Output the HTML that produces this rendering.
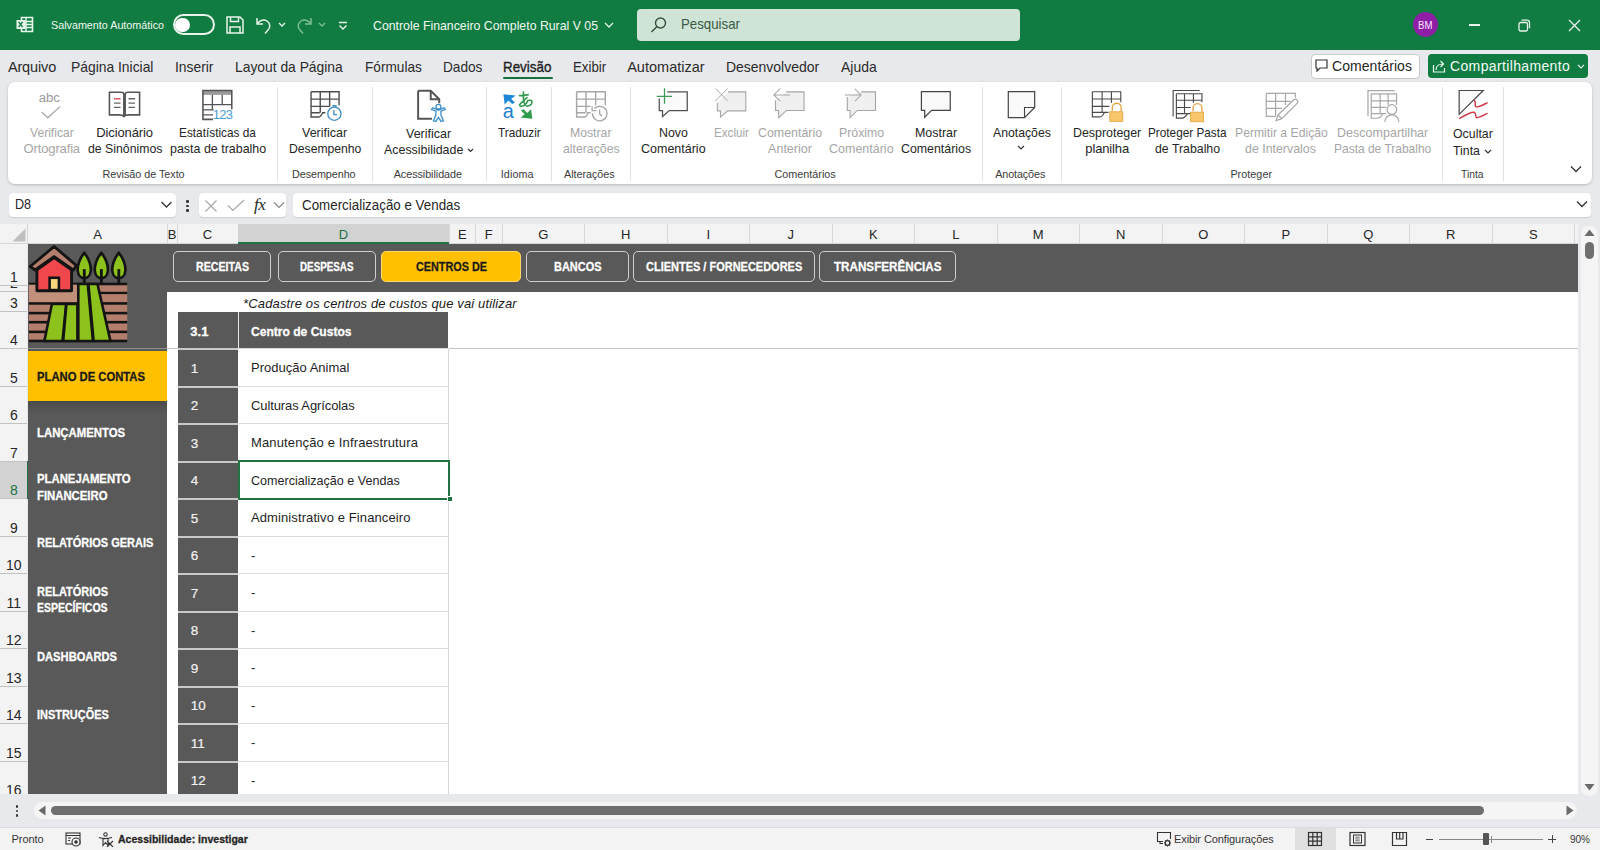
<!DOCTYPE html>
<html><head><meta charset="utf-8"><title>Excel</title>
<style>
html,body{margin:0;padding:0;}
body{width:1600px;height:850px;overflow:hidden;position:relative;background:#e8e9ec;font-family:"Liberation Sans",sans-serif;}
.t{position:absolute;white-space:nowrap;font-family:"Liberation Sans",sans-serif;}
.r{position:absolute;}
</style></head><body>
<div class="r" style="left:0px;top:0px;width:1600px;height:50px;background:#107c41;"></div>
<svg class="r" style="left:16px;top:16px;" width="18" height="17" viewBox="0 0 18 17"><path d="M5.5 1.5h11v14h-11z" fill="none" stroke="#e8f5ec" stroke-width="1.6"/><path d="M5.5 5.5h11M5.5 8.5h11M5.5 11.5h11M10 1.5v14" stroke="#e8f5ec" stroke-width="1.4"/><rect x="0.5" y="4" width="9" height="9" fill="#e8f5ec"/><path d="M2.6 5.8l4 5.4M6.6 5.8l-4 5.4" stroke="#107c41" stroke-width="1.4"/></svg>
<div class="t" style="left:51.00px;top:20.12px;font-size:11.5px;line-height:11.5px;color:#f2f7f3;letter-spacing:0.000px;transform:scaleX(0.9354);transform-origin:0.00px 0;">Salvamento Automático</div>
<div class="r" style="left:172.5px;top:14px;width:38px;height:17px;border:2px solid #e9f3ec;border-radius:11px"></div>
<div class="r" style="left:175px;top:17.5px;width:14.5px;height:14.5px;border-radius:50%;background:#fff"></div>
<svg class="r" style="left:226px;top:16px;" width="18" height="18" viewBox="0 0 18 18"><path d="M1 1h13l3 3v13H1z" fill="none" stroke="#e9f3ec" stroke-width="1.5"/><path d="M4.5 1v4.5h8V1M4 17v-6h10v6" fill="none" stroke="#e9f3ec" stroke-width="1.5"/></svg>
<svg class="r" style="left:255px;top:16px;" width="18" height="18" viewBox="0 0 18 18"><path d="M2 2v6h6" fill="none" stroke="#e9f3ec" stroke-width="1.5"/><path d="M2.5 7.5C5 4 9 3 12 5c3.5 2.5 3.5 6.5 1 9l-3 3.5" fill="none" stroke="#e9f3ec" stroke-width="1.5"/></svg>
<svg class="r" style="left:278px;top:21px;" width="8" height="7" viewBox="0 0 8 7"><path d="M1 2l3 3 3-3" fill="none" stroke="#e9f3ec" stroke-width="1.3"/></svg>
<svg class="r" style="left:295px;top:16px;" width="18" height="18" viewBox="0 0 18 18"><path d="M16 2v6h-6" fill="none" stroke="#7fbf95" stroke-width="1.5"/><path d="M15.5 7.5C13 4 9 3 6 5c-3.5 2.5-3.5 6.5-1 9l3 3.5" fill="none" stroke="#7fbf95" stroke-width="1.5"/></svg>
<svg class="r" style="left:318px;top:21px;" width="8" height="7" viewBox="0 0 8 7"><path d="M1 2l3 3 3-3" fill="none" stroke="#7fbf95" stroke-width="1.3"/></svg>
<svg class="r" style="left:338px;top:21px;" width="10" height="10" viewBox="0 0 10 10"><path d="M1 1.5h8M1.5 4.5l3.5 3.5 3.5-3.5" fill="none" stroke="#e9f3ec" stroke-width="1.4"/></svg>
<div class="t" style="left:373.00px;top:18.95px;font-size:13px;line-height:13px;color:#f2f7f3;letter-spacing:0.000px;transform:scaleX(0.9466);transform-origin:0.00px 0;">Controle Financeiro Completo Rural V 05</div>
<svg class="r" style="left:604px;top:21px;" width="10" height="8" viewBox="0 0 10 8"><path d="M1 2l4 4 4-4" fill="none" stroke="#e9f3ec" stroke-width="1.3"/></svg>
<div class="r" style="left:637px;top:9px;width:382.5px;height:31.5px;background:#cfe4d6;border-radius:4px"></div>
<svg class="r" style="left:650px;top:17px;" width="17" height="16" viewBox="0 0 17 16"><circle cx="10.5" cy="6" r="5" fill="none" stroke="#33503d" stroke-width="1.4"/><path d="M7 9.5L1.5 15" stroke="#33503d" stroke-width="1.5"/></svg>
<div class="t" style="left:680.50px;top:17.18px;font-size:14.5px;line-height:14.5px;color:#3a5a45;letter-spacing:0.000px;transform:scaleX(0.9147);transform-origin:0.00px 0;">Pesquisar</div>
<div class="r" style="left:1412.5px;top:12px;width:25px;height:25px;border-radius:50%;background:#8f1ea6"></div>
<div class="t" style="left:1417.50px;top:20.08px;font-size:10.5px;line-height:10.5px;color:#fbe6ff;letter-spacing:0.000px;transform:scaleX(0.9177);transform-origin:0.00px 0;">BM</div>
<div class="r" style="left:1469px;top:24px;width:11px;height:1.5px;background:#e9f3ec;"></div>
<svg class="r" style="left:1518px;top:19px;" width="13" height="13" viewBox="0 0 13 13"><rect x="1" y="3.5" width="8.5" height="8.5" rx="1.5" fill="none" stroke="#e9f3ec" stroke-width="1.3"/><path d="M3.5 1.2h5.5a2.5 2.5 0 0 1 2.5 2.5v5.5" fill="none" stroke="#e9f3ec" stroke-width="1.3"/></svg>
<svg class="r" style="left:1568px;top:19px;" width="13" height="13" viewBox="0 0 13 13"><path d="M1 1l11 11M12 1L1 12" stroke="#e9f3ec" stroke-width="1.3"/></svg>
<div class="r" style="left:0px;top:50px;width:1600px;height:138px;background:#e8e9ec;"></div>
<div class="t" style="left:7.90px;top:60.08px;font-size:14.5px;line-height:14.5px;color:#2b2b2b;letter-spacing:-0.133px;">Arquivo</div>
<div class="t" style="left:71.30px;top:60.08px;font-size:14.5px;line-height:14.5px;color:#2b2b2b;letter-spacing:0.000px;transform:scaleX(0.9560);transform-origin:0.00px 0;">Página Inicial</div>
<div class="t" style="left:174.50px;top:60.08px;font-size:14.5px;line-height:14.5px;color:#2b2b2b;letter-spacing:0.000px;transform:scaleX(0.9553);transform-origin:0.00px 0;">Inserir</div>
<div class="t" style="left:234.75px;top:60.08px;font-size:14.5px;line-height:14.5px;color:#2b2b2b;letter-spacing:0.000px;transform:scaleX(0.9544);transform-origin:0.00px 0;">Layout da Página</div>
<div class="t" style="left:365.40px;top:60.08px;font-size:14.5px;line-height:14.5px;color:#2b2b2b;letter-spacing:0.000px;transform:scaleX(0.9404);transform-origin:0.00px 0;">Fórmulas</div>
<div class="t" style="left:442.80px;top:60.08px;font-size:14.5px;line-height:14.5px;color:#2b2b2b;letter-spacing:0.000px;transform:scaleX(0.9403);transform-origin:0.00px 0;">Dados</div>
<div class="t" style="left:503.20px;top:60.08px;font-size:14.5px;line-height:14.5px;color:#1f1f1f;letter-spacing:0.000px;-webkit-text-stroke:0.35px #1f1f1f;transform:scaleX(0.9237);transform-origin:0.00px 0;">Revisão</div>
<div class="t" style="left:573.20px;top:60.08px;font-size:14.5px;line-height:14.5px;color:#2b2b2b;letter-spacing:0.000px;transform:scaleX(0.9146);transform-origin:0.00px 0;">Exibir</div>
<div class="t" style="left:627.20px;top:60.08px;font-size:14.5px;line-height:14.5px;color:#2b2b2b;letter-spacing:0.010px;">Automatizar</div>
<div class="t" style="left:726.00px;top:60.08px;font-size:14.5px;line-height:14.5px;color:#2b2b2b;letter-spacing:0.000px;transform:scaleX(0.9628);transform-origin:0.00px 0;">Desenvolvedor</div>
<div class="t" style="left:840.50px;top:60.08px;font-size:14.5px;line-height:14.5px;color:#2b2b2b;letter-spacing:0.000px;transform:scaleX(0.9623);transform-origin:0.00px 0;">Ajuda</div>
<div class="r" style="left:503px;top:76.5px;width:50px;height:2.5px;background:#17703e;border-radius:1.5px;"></div>
<div class="r" style="left:1310.5px;top:53.5px;width:107px;height:23px;background:#fff;border:1px solid #c9c9c9;border-radius:4px"></div>
<svg class="r" style="left:1315px;top:59px;" width="13" height="13" viewBox="0 0 13 13"><path d="M1 1h11v8H5l-3 3V9H1z" fill="none" stroke="#333" stroke-width="1.2"/></svg>
<div class="t" style="left:1332.00px;top:59.10px;font-size:14px;line-height:14px;color:#262626;letter-spacing:0.060px;">Comentários</div>
<div class="r" style="left:1428px;top:53.5px;width:159.5px;height:24.5px;background:#107c41;border-radius:4px"></div>
<svg class="r" style="left:1432px;top:59px;" width="14" height="14" viewBox="0 0 14 14"><path d="M1.5 6v7h11V9" fill="none" stroke="#e8f5ec" stroke-width="1.2"/><path d="M4 11c0-4 3-6 7-6M8.5 2l3 3-3 3" fill="none" stroke="#e8f5ec" stroke-width="1.2"/></svg>
<div class="t" style="left:1450.00px;top:59.10px;font-size:14px;line-height:14px;color:#f4faf6;letter-spacing:0.360px;">Compartilhamento</div>
<svg class="r" style="left:1577px;top:64px;" width="8" height="6" viewBox="0 0 8 6"><path d="M1 1l3 3 3-3" fill="none" stroke="#e8f5ec" stroke-width="1.2"/></svg>
<div class="r" style="left:8px;top:82px;width:1583.5px;height:102px;background:#fff;border-radius:7px;box-shadow:0 1px 3px rgba(0,0,0,0.20)"></div>
<div class="t" style="left:29.75px;top:125.75px;font-size:13px;line-height:13px;color:#a6a6a6;letter-spacing:0.000px;transform:scaleX(0.9309);transform-origin:0.00px 0;">Verificar</div>
<div class="t" style="left:23.60px;top:141.95px;font-size:13px;line-height:13px;color:#a6a6a6;letter-spacing:-0.144px;">Ortografia</div>
<div class="t" style="left:96.25px;top:125.75px;font-size:13px;line-height:13px;color:#262626;letter-spacing:-0.106px;">Dicionário</div>
<div class="t" style="left:87.50px;top:141.95px;font-size:13px;line-height:13px;color:#262626;letter-spacing:0.000px;transform:scaleX(0.9442);transform-origin:0.00px 0;">de Sinônimos</div>
<div class="t" style="left:179.40px;top:125.75px;font-size:13px;line-height:13px;color:#262626;letter-spacing:0.000px;transform:scaleX(0.9102);transform-origin:0.00px 0;">Estatísticas da</div>
<div class="t" style="left:169.75px;top:141.95px;font-size:13px;line-height:13px;color:#262626;letter-spacing:0.000px;transform:scaleX(0.9577);transform-origin:0.00px 0;">pasta de trabalho</div>
<div class="t" style="left:102.40px;top:169.12px;font-size:10.8px;line-height:10.8px;color:#3b3b3b;letter-spacing:-0.027px;">Revisão de Texto</div>
<div class="t" style="left:302.40px;top:125.75px;font-size:13px;line-height:13px;color:#262626;letter-spacing:0.000px;transform:scaleX(0.9596);transform-origin:0.00px 0;">Verificar</div>
<div class="t" style="left:289.00px;top:141.95px;font-size:13px;line-height:13px;color:#262626;letter-spacing:0.000px;transform:scaleX(0.9360);transform-origin:0.00px 0;">Desempenho</div>
<div class="t" style="left:292.00px;top:169.12px;font-size:10.8px;line-height:10.8px;color:#3b3b3b;letter-spacing:-0.067px;">Desempenho</div>
<div class="t" style="left:406.40px;top:126.75px;font-size:13px;line-height:13px;color:#262626;letter-spacing:0.000px;transform:scaleX(0.9596);transform-origin:0.00px 0;">Verificar</div>
<div class="t" style="left:383.80px;top:143.45px;font-size:13px;line-height:13px;color:#262626;letter-spacing:0.000px;transform:scaleX(0.9543);transform-origin:0.00px 0;">Acessibilidade</div>
<svg class="r" style="left:467px;top:148px;" width="7" height="5" viewBox="0 0 7 5"><path d="M1 1l2.5 2.5L6 1" fill="none" stroke="#333" stroke-width="1.2"/></svg>
<div class="t" style="left:393.70px;top:169.12px;font-size:10.8px;line-height:10.8px;color:#3b3b3b;letter-spacing:-0.054px;">Acessibilidade</div>
<div class="t" style="left:497.80px;top:125.75px;font-size:13px;line-height:13px;color:#262626;letter-spacing:0.000px;transform:scaleX(0.9068);transform-origin:0.00px 0;">Traduzir</div>
<div class="t" style="left:500.80px;top:169.12px;font-size:10.8px;line-height:10.8px;color:#3b3b3b;letter-spacing:0.060px;">Idioma</div>
<div class="t" style="left:569.50px;top:125.75px;font-size:13px;line-height:13px;color:#a6a6a6;letter-spacing:0.000px;transform:scaleX(0.9410);transform-origin:0.00px 0;">Mostrar</div>
<div class="t" style="left:562.60px;top:141.95px;font-size:13px;line-height:13px;color:#a6a6a6;letter-spacing:0.000px;transform:scaleX(0.9433);transform-origin:0.00px 0;">alterações</div>
<div class="t" style="left:564.00px;top:169.12px;font-size:10.8px;line-height:10.8px;color:#3b3b3b;letter-spacing:-0.044px;">Alterações</div>
<div class="t" style="left:658.90px;top:125.75px;font-size:13px;line-height:13px;color:#262626;letter-spacing:0.000px;transform:scaleX(0.9521);transform-origin:0.00px 0;">Novo</div>
<div class="t" style="left:641.00px;top:141.95px;font-size:13px;line-height:13px;color:#262626;letter-spacing:0.000px;transform:scaleX(0.9613);transform-origin:0.00px 0;">Comentário</div>
<div class="t" style="left:713.90px;top:125.75px;font-size:13px;line-height:13px;color:#a6a6a6;letter-spacing:0.000px;transform:scaleX(0.8949);transform-origin:0.00px 0;">Excluir</div>
<div class="t" style="left:757.90px;top:125.75px;font-size:13px;line-height:13px;color:#a6a6a6;letter-spacing:0.000px;transform:scaleX(0.9539);transform-origin:0.00px 0;">Comentário</div>
<div class="t" style="left:768.00px;top:141.95px;font-size:13px;line-height:13px;color:#a6a6a6;letter-spacing:0.000px;transform:scaleX(0.9670);transform-origin:0.00px 0;">Anterior</div>
<div class="t" style="left:838.50px;top:125.75px;font-size:13px;line-height:13px;color:#a6a6a6;letter-spacing:0.000px;transform:scaleX(0.9455);transform-origin:0.00px 0;">Próximo</div>
<div class="t" style="left:829.40px;top:141.95px;font-size:13px;line-height:13px;color:#a6a6a6;letter-spacing:0.000px;transform:scaleX(0.9613);transform-origin:0.00px 0;">Comentário</div>
<div class="t" style="left:914.60px;top:125.75px;font-size:13px;line-height:13px;color:#262626;letter-spacing:0.000px;transform:scaleX(0.9546);transform-origin:0.00px 0;">Mostrar</div>
<div class="t" style="left:900.90px;top:141.95px;font-size:13px;line-height:13px;color:#262626;letter-spacing:0.000px;transform:scaleX(0.9512);transform-origin:0.00px 0;">Comentários</div>
<div class="t" style="left:774.40px;top:169.12px;font-size:10.8px;line-height:10.8px;color:#3b3b3b;letter-spacing:0.010px;">Comentários</div>
<div class="t" style="left:993.00px;top:125.75px;font-size:13px;line-height:13px;color:#262626;letter-spacing:0.000px;transform:scaleX(0.9414);transform-origin:0.00px 0;">Anotações</div>
<svg class="r" style="left:1017px;top:145px;" width="8" height="5" viewBox="0 0 8 5"><path d="M1 1l3 3 3-3" fill="none" stroke="#333" stroke-width="1.2"/></svg>
<div class="t" style="left:995.20px;top:169.12px;font-size:10.8px;line-height:10.8px;color:#3b3b3b;letter-spacing:-0.113px;">Anotações</div>
<div class="t" style="left:1072.80px;top:125.75px;font-size:13px;line-height:13px;color:#262626;letter-spacing:0.000px;transform:scaleX(0.9538);transform-origin:0.00px 0;">Desproteger</div>
<div class="t" style="left:1085.30px;top:141.95px;font-size:13px;line-height:13px;color:#262626;letter-spacing:-0.143px;">planilha</div>
<div class="t" style="left:1148.40px;top:125.75px;font-size:13px;line-height:13px;color:#262626;letter-spacing:0.000px;transform:scaleX(0.9055);transform-origin:0.00px 0;">Proteger Pasta</div>
<div class="t" style="left:1155.20px;top:141.95px;font-size:13px;line-height:13px;color:#262626;letter-spacing:0.000px;transform:scaleX(0.9476);transform-origin:0.00px 0;">de Trabalho</div>
<div class="t" style="left:1234.50px;top:125.75px;font-size:13px;line-height:13px;color:#a6a6a6;letter-spacing:0.000px;transform:scaleX(0.9374);transform-origin:0.00px 0;">Permitir a Edição</div>
<div class="t" style="left:1245.00px;top:141.95px;font-size:13px;line-height:13px;color:#a6a6a6;letter-spacing:0.000px;transform:scaleX(0.9516);transform-origin:0.00px 0;">de Intervalos</div>
<div class="t" style="left:1336.70px;top:125.75px;font-size:13px;line-height:13px;color:#a6a6a6;letter-spacing:0.000px;transform:scaleX(0.9641);transform-origin:0.00px 0;">Descompartilhar</div>
<div class="t" style="left:1334.00px;top:141.95px;font-size:13px;line-height:13px;color:#a6a6a6;letter-spacing:0.000px;transform:scaleX(0.9213);transform-origin:0.00px 0;">Pasta de Trabalho</div>
<div class="t" style="left:1230.40px;top:169.12px;font-size:10.8px;line-height:10.8px;color:#3b3b3b;letter-spacing:0.029px;">Proteger</div>
<div class="t" style="left:1453.20px;top:126.95px;font-size:13px;line-height:13px;color:#262626;letter-spacing:0.000px;transform:scaleX(0.9499);transform-origin:0.00px 0;">Ocultar</div>
<div class="t" style="left:1453.00px;top:143.95px;font-size:13px;line-height:13px;color:#262626;letter-spacing:0.000px;transform:scaleX(0.9474);transform-origin:0.00px 0;">Tinta</div>
<svg class="r" style="left:1484px;top:149px;" width="8" height="5" viewBox="0 0 8 5"><path d="M1 1l3 3 3-3" fill="none" stroke="#333" stroke-width="1.2"/></svg>
<div class="t" style="left:1461.00px;top:169.12px;font-size:10.8px;line-height:10.8px;color:#3b3b3b;letter-spacing:0.000px;transform:scaleX(0.9536);transform-origin:0.00px 0;">Tinta</div>
<svg class="r" style="left:1570px;top:165px;" width="12" height="8" viewBox="0 0 12 8"><path d="M1 1.5l5 5 5-5" fill="none" stroke="#333" stroke-width="1.3"/></svg>
<div class="r" style="left:276.5px;top:87px;width:1.0px;height:94px;background:#e1e1e1;"></div>
<div class="r" style="left:371.8px;top:87px;width:1.0px;height:94px;background:#e1e1e1;"></div>
<div class="r" style="left:485.5px;top:87px;width:1.0px;height:94px;background:#e1e1e1;"></div>
<div class="r" style="left:551px;top:87px;width:1px;height:94px;background:#e1e1e1;"></div>
<div class="r" style="left:629.6px;top:87px;width:1.0px;height:94px;background:#e1e1e1;"></div>
<div class="r" style="left:981.5px;top:87px;width:1.0px;height:94px;background:#e1e1e1;"></div>
<div class="r" style="left:1061.2px;top:87px;width:1.0px;height:94px;background:#e1e1e1;"></div>
<div class="r" style="left:1442.4px;top:87px;width:1.0px;height:94px;background:#e1e1e1;"></div>
<div class="r" style="left:1503.1px;top:87px;width:1.0px;height:94px;background:#e1e1e1;"></div>
<svg class="r" style="left:30px;top:85px" width="210" height="40" viewBox="0 0 1600 305" fill="none" stroke-linecap="butt" stroke-linejoin="miter"><text x="66" y="132" font-family="Liberation Sans" font-size="100" fill="#9a9a9a" stroke="none">abc</text><path d="M88 205L135 250L228 165" stroke="#a6a6a6" stroke-width="10"/><path d="M715 240V72Q715 55 695 55H605V228H680Q705 228 715 240Q725 228 750 228H835V55H745Q725 55 725 72V240" fill="#fff" stroke="#555" stroke-width="12"/><path d="M640 105H690" stroke="#d8434f" stroke-width="10"/><path d="M640 138H690M640 170H690M750 105H800M750 138H800M750 170H800" stroke="#666" stroke-width="10"/><rect x="1318" y="42" width="220" height="33" fill="#9a9a9a" stroke="none"/><path d="M1395 262H1318V42H1538V185" stroke="#555" stroke-width="12"/><path d="M1318 150H1538M1318 190H1400M1318 228H1395M1390 75V190M1465 75V150" stroke="#555" stroke-width="10"/><text x="1392" y="258" font-family="Liberation Sans" font-size="98" fill="#4a9bd0" stroke="none" letter-spacing="-4">123</text></svg>
<svg class="r" style="left:300px;top:85px" width="60" height="40" viewBox="0 0 1275 850" fill="none" stroke-linecap="butt" stroke-linejoin="miter"><path d="M235 145H830V430M235 145V680H400Q440 680 480 590H540M235 300H830M235 455H630M235 590H420M430 145V590M630 145V455" stroke="#4d4d4d" stroke-width="30"/><circle cx="730" cy="610" r="140" fill="#fff" stroke="#3d8cc0" stroke-width="28"/><rect x="690" y="425" width="90" height="35" fill="#3d8cc0" stroke="none"/><path d="M720 530V630H790" stroke="#3d8cc0" stroke-width="28"/></svg>
<svg class="r" style="left:410px;top:85px" width="130" height="40" viewBox="0 0 1600 492" fill="none" stroke-linecap="butt" stroke-linejoin="miter"><path d="M100 70H255L360 175V225M100 70V415H270M255 70V175H360" stroke="#555" stroke-width="24"/><circle cx="350" cy="268" r="30" fill="#fff" stroke="#3a8fc8" stroke-width="16"/><path d="M265 300L320 322L318 372L288 440L318 448L350 398L382 448L412 440L382 372L380 322L435 300L420 280L350 310L280 280Z" fill="#fff" stroke="#3a8fc8" stroke-width="16"/><polygon points="1150,115 1300,130 1245,172 1292,215 1258,235 1210,192 1165,240" fill="#1e88d8" stroke="none"/><text x="1140" y="410" font-family="Liberation Sans" font-size="245" fill="#1e7fd0" stroke="none">a</text><path d="M1340 130Q1400 128 1462 118M1398 78Q1385 180 1420 258M1445 150Q1370 220 1350 240Q1345 265 1375 262Q1430 250 1450 190Q1520 175 1495 232Q1480 258 1428 262" stroke="#2e9a4e" stroke-width="20"/><polygon points="1505,415 1360,400 1412,360 1365,315 1398,298 1442,343 1490,298" fill="#2e9a4e" stroke="none"/></svg>
<svg class="r" style="left:570px;top:85px" width="60" height="40" viewBox="0 0 1275 850" fill="none" stroke-linecap="butt" stroke-linejoin="miter"><path d="M140 145H750V430M140 145V680H310Q350 680 380 590H440M140 300H750M140 455H440M140 590H330M340 145V590M545 145V430" stroke="#a6a6a6" stroke-width="30"/><path d="M520 500A155 155 0 1 1 478 600" fill="#fff" stroke="#a6a6a6" stroke-width="28"/><path d="M470 455V545H565M630 520V610L680 665" stroke="#a6a6a6" stroke-width="28"/></svg>
<svg class="r" style="left:650px;top:84px" width="80" height="38" viewBox="0 0 1600 760" fill="none" stroke-linecap="butt" stroke-linejoin="miter"><path d="M345 155H745V530H385L250 650V530H185V290" fill="#fbfbfb" stroke="#505050" stroke-width="25"/><path d="M290 85V395M135 245H440" stroke="#3c9a5a" stroke-width="25"/></svg>
<svg class="r" style="left:710px;top:84px" width="60" height="38" viewBox="0 0 1342 850" fill="none" stroke-linecap="butt" stroke-linejoin="miter"><path d="M405 175H800V600H395L235 740V600H165V420" fill="#f0f0f0" stroke="#a6a6a6" stroke-width="25"/><path d="M120 100L395 380M395 100L120 385" stroke="#a6a6a6" stroke-width="22"/></svg>
<svg class="r" style="left:770px;top:84px" width="110" height="38" viewBox="0 0 1600 553" fill="none" stroke-linecap="butt" stroke-linejoin="miter"><path d="M235 115H495V385H240L125 490V385H80V235" fill="#f0f0f0" stroke="#a6a6a6" stroke-width="16"/><path d="M55 160H290M150 65L55 160L150 250" stroke="#a6a6a6" stroke-width="15"/><path d="M1325 115H1535V385H1270L1165 490V385H1125V190" fill="#f0f0f0" stroke="#a6a6a6" stroke-width="16"/><path d="M1090 160H1325M1235 70L1325 160L1235 250" stroke="#a6a6a6" stroke-width="15"/></svg>
<svg class="r" style="left:910px;top:84px" width="130" height="38" viewBox="0 0 1600 468" fill="none" stroke-linecap="butt" stroke-linejoin="miter"><path d="M140 95H495V325H265L180 410V325H140Z" fill="#fafafa" stroke="#454545" stroke-width="15"/><path d="M1210 95H1535V290L1410 415H1210Z" fill="#fafafa" stroke="#454545" stroke-width="15"/><path d="M1535 290H1410V415" stroke="#454545" stroke-width="14"/></svg>
<svg class="r" style="left:1085px;top:84px" width="130" height="41" viewBox="0 0 1600 505" fill="none" stroke-linecap="butt" stroke-linejoin="miter"><path d="M90 95H440V225M90 95V405H180Q210 405 240 350H290M90 185H440M90 275H300M90 350H240M210 95V350M325 95V230" stroke="#4a4a4a" stroke-width="14"/><path d="M335 332V292A55 55 0 0 1 445 292V342" stroke="#e3a23c" stroke-width="16"/><rect x="305" y="342" width="160" height="118" fill="#f8c66c" stroke="#e5a33a" stroke-width="10"/><path d="M1085 400V80H1410" stroke="#4a4a4a" stroke-width="14"/><path d="M1125 120H1440V225M1125 120V420H1195Q1230 420 1260 365H1310M1125 200H1440M1125 290H1300M1125 365H1250M1225 120V365M1335 120V230" stroke="#4a4a4a" stroke-width="14"/><path d="M1330 337V297A55 55 0 0 1 1440 297V347" stroke="#e3a23c" stroke-width="16"/><rect x="1300" y="347" width="160" height="118" fill="#f8c66c" stroke="#e5a33a" stroke-width="10"/></svg>
<svg class="r" style="left:1255px;top:84px" width="150" height="41" viewBox="0 0 1600 437" fill="none" stroke-linecap="butt" stroke-linejoin="miter"><path d="M120 100H430V145M120 100V345H220M120 185H380M120 260H290M220 100V345M325 100V225" stroke="#a8a8a8" stroke-width="13"/><path d="M225 390L245 330L410 170Q430 150 450 172Q465 192 445 212L285 370Z M245 330L285 370" fill="#fff" stroke="#a8a8a8" stroke-width="13"/><path d="M1205 345V70H1490" stroke="#a8a8a8" stroke-width="13"/><path d="M1240 105H1510V225M1240 105V365H1300Q1340 365 1365 315H1400M1240 180H1510M1240 250H1400M1240 315H1360M1335 105V315M1420 105V225" stroke="#a8a8a8" stroke-width="13"/><circle cx="1460" cy="272" r="52" fill="#fff" stroke="#a8a8a8" stroke-width="13"/><path d="M1385 405A75 75 0 0 1 1535 405" fill="#fff" stroke="#a8a8a8" stroke-width="13"/></svg>
<svg class="r" style="left:1450px;top:84px" width="50" height="41" viewBox="0 0 1037 850" fill="none" stroke-linecap="butt" stroke-linejoin="miter"><path d="M190 135H690L190 630Z" fill="#fafafa" stroke="#4a4a4a" stroke-width="25"/><path d="M490 335C545 350 515 430 530 465C565 505 700 425 780 385" stroke="#cc3a4a" stroke-width="30"/><path d="M190 720C300 655 450 560 510 590C550 620 515 700 560 700C620 690 700 645 780 610" stroke="#cc3a4a" stroke-width="30"/></svg>
<div class="r" style="left:9px;top:193px;width:167px;height:23.5px;background:#fff;border-radius:4px;box-shadow:0 0.5px 1px rgba(0,0,0,0.12)"></div>
<div class="t" style="left:14.70px;top:197.28px;font-size:14.5px;line-height:14.5px;color:#262626;letter-spacing:0.000px;transform:scaleX(0.8703);transform-origin:0.00px 0;">D8</div>
<svg class="r" style="left:160px;top:200px;" width="13" height="9" viewBox="0 0 13 9"><path d="M1.5 2l5 5 5-5" fill="none" stroke="#333" stroke-width="1.3"/></svg>
<div class="r" style="left:186px;top:200px;width:2.5px;height:2.5px;border-radius:50%;background:#333"></div>
<div class="r" style="left:186px;top:204.5px;width:2.5px;height:2.5px;border-radius:50%;background:#333"></div>
<div class="r" style="left:186px;top:209px;width:2.5px;height:2.5px;border-radius:50%;background:#333"></div>
<div class="r" style="left:199px;top:193px;width:86.5px;height:23.5px;background:#fff;border-radius:4px;box-shadow:0 0.5px 1px rgba(0,0,0,0.12)"></div>
<svg class="r" style="left:204px;top:199px;" width="14" height="14" viewBox="0 0 14 14"><path d="M1.5 1.5l11 11M12.5 1.5l-11 11" stroke="#a8a8a8" stroke-width="1.2"/></svg>
<svg class="r" style="left:227px;top:199px;" width="18" height="13" viewBox="0 0 18 13"><path d="M1 6.5l5 5L17 1" fill="none" stroke="#a8a8a8" stroke-width="1.2"/></svg>
<div class="t" style="left:254px;top:196px;font-family:'Liberation Serif';font-style:italic;font-size:17px;line-height:17px;color:#262626;letter-spacing:-0.5px">fx</div>
<svg class="r" style="left:273px;top:201px;" width="12" height="8" viewBox="0 0 12 8"><path d="M1 1.5l5 5 5-5" fill="none" stroke="#888" stroke-width="1.2"/></svg>
<div class="r" style="left:292.5px;top:193px;width:1298.5px;height:23.5px;background:#fff;border-radius:4px;box-shadow:0 0.5px 1px rgba(0,0,0,0.12)"></div>
<div class="t" style="left:302.30px;top:197.90px;font-size:14px;line-height:14px;color:#262626;letter-spacing:0.000px;transform:scaleX(0.9542);transform-origin:0.00px 0;">Comercialização e Vendas</div>
<svg class="r" style="left:1576px;top:200px;" width="12" height="8" viewBox="0 0 12 8"><path d="M1 1.5l5 5 5-5" fill="none" stroke="#333" stroke-width="1.3"/></svg>
<div class="r" style="left:0px;top:224px;width:1578px;height:20px;background:#f3f3f3;"></div>
<div class="r" style="left:0px;top:243px;width:1578px;height:1px;background:#d6d6d6;"></div>
<svg class="r" style="left:11px;top:227px;" width="16" height="15" viewBox="0 0 16 15"><path d="M14.5 1.5v13h-13z" fill="#bfbfbf"/></svg>
<div class="r" style="left:166.5px;top:224px;width:1.0px;height:19px;background:#d9d9d9;"></div>
<div class="t" style="left:93.15px;top:227.95px;font-size:13px;line-height:13px;color:#262626;letter-spacing:0.000px;">A</div>
<div class="r" style="left:176.5px;top:224px;width:1.0px;height:19px;background:#d9d9d9;"></div>
<div class="t" style="left:167.65px;top:227.95px;font-size:13px;line-height:13px;color:#262626;letter-spacing:0.000px;">B</div>
<div class="r" style="left:237.5px;top:224px;width:1.0px;height:19px;background:#d9d9d9;"></div>
<div class="t" style="left:202.80px;top:227.95px;font-size:13px;line-height:13px;color:#262626;letter-spacing:0.000px;">C</div>
<div class="r" style="left:238px;top:224px;width:211px;height:19px;background:#d2d2d2;"></div>
<div class="r" style="left:238px;top:241.5px;width:211px;height:2.0px;background:#217346;"></div>
<div class="r" style="left:448.5px;top:224px;width:1.0px;height:19px;background:#d9d9d9;"></div>
<div class="t" style="left:338.80px;top:227.95px;font-size:13px;line-height:13px;color:#217346;letter-spacing:0.000px;">D</div>
<div class="r" style="left:475.0px;top:224px;width:1.0px;height:19px;background:#d9d9d9;"></div>
<div class="t" style="left:457.90px;top:227.95px;font-size:13px;line-height:13px;color:#262626;letter-spacing:0.000px;">E</div>
<div class="r" style="left:501.5px;top:224px;width:1.0px;height:19px;background:#d9d9d9;"></div>
<div class="t" style="left:484.80px;top:227.95px;font-size:13px;line-height:13px;color:#262626;letter-spacing:0.000px;">F</div>
<div class="r" style="left:584.0px;top:224px;width:1.0px;height:19px;background:#d9d9d9;"></div>
<div class="t" style="left:538.20px;top:227.95px;font-size:13px;line-height:13px;color:#262626;letter-spacing:0.000px;">G</div>
<div class="r" style="left:666.5px;top:224px;width:1.0px;height:19px;background:#d9d9d9;"></div>
<div class="t" style="left:621.05px;top:227.95px;font-size:13px;line-height:13px;color:#262626;letter-spacing:0.000px;">H</div>
<div class="r" style="left:749.0px;top:224px;width:1.0px;height:19px;background:#d9d9d9;"></div>
<div class="t" style="left:706.45px;top:227.95px;font-size:13px;line-height:13px;color:#262626;letter-spacing:0.000px;">I</div>
<div class="r" style="left:831.5px;top:224px;width:1.0px;height:19px;background:#d9d9d9;"></div>
<div class="t" style="left:787.50px;top:227.95px;font-size:13px;line-height:13px;color:#262626;letter-spacing:0.000px;">J</div>
<div class="r" style="left:914.0px;top:224px;width:1.0px;height:19px;background:#d9d9d9;"></div>
<div class="t" style="left:868.90px;top:227.95px;font-size:13px;line-height:13px;color:#262626;letter-spacing:0.000px;">K</div>
<div class="r" style="left:996.5px;top:224px;width:1.0px;height:19px;background:#d9d9d9;"></div>
<div class="t" style="left:952.15px;top:227.95px;font-size:13px;line-height:13px;color:#262626;letter-spacing:0.000px;">L</div>
<div class="r" style="left:1079.0px;top:224px;width:1.0px;height:19px;background:#d9d9d9;"></div>
<div class="t" style="left:1032.85px;top:227.95px;font-size:13px;line-height:13px;color:#262626;letter-spacing:0.000px;">M</div>
<div class="r" style="left:1161.5px;top:224px;width:1.0px;height:19px;background:#d9d9d9;"></div>
<div class="t" style="left:1116.05px;top:227.95px;font-size:13px;line-height:13px;color:#262626;letter-spacing:0.000px;">N</div>
<div class="r" style="left:1244.0px;top:224px;width:1.0px;height:19px;background:#d9d9d9;"></div>
<div class="t" style="left:1198.20px;top:227.95px;font-size:13px;line-height:13px;color:#262626;letter-spacing:0.000px;">O</div>
<div class="r" style="left:1326.5px;top:224px;width:1.0px;height:19px;background:#d9d9d9;"></div>
<div class="t" style="left:1281.40px;top:227.95px;font-size:13px;line-height:13px;color:#262626;letter-spacing:0.000px;">P</div>
<div class="r" style="left:1409.0px;top:224px;width:1.0px;height:19px;background:#d9d9d9;"></div>
<div class="t" style="left:1363.20px;top:227.95px;font-size:13px;line-height:13px;color:#262626;letter-spacing:0.000px;">Q</div>
<div class="r" style="left:1491.5px;top:224px;width:1.0px;height:19px;background:#d9d9d9;"></div>
<div class="t" style="left:1446.05px;top:227.95px;font-size:13px;line-height:13px;color:#262626;letter-spacing:0.000px;">R</div>
<div class="r" style="left:1574.0px;top:224px;width:1.0px;height:19px;background:#d9d9d9;"></div>
<div class="t" style="left:1528.90px;top:227.95px;font-size:13px;line-height:13px;color:#262626;letter-spacing:0.000px;">S</div>
<div class="r" style="left:27px;top:224px;width:1px;height:19px;background:#d6d6d6;"></div>
<div class="r" style="left:0px;top:244px;width:27px;height:550px;background:#f3f3f3;"></div>
<div class="r" style="left:0;top:244px;width:28px;height:550px;overflow:hidden">
<div class="r" style="left:0;top:0px;width:27px;height:40.5px;overflow:hidden"><div class="t" style="left:9.90px;top:25.90px;font-size:14px;line-height:14px;color:#262626">1</div></div>
<div class="r" style="left:0;top:41px;width:27px;height:6.0px;overflow:hidden"><div class="t" style="left:9.90px;top:-8.60px;font-size:14px;line-height:14px;color:#262626">2</div></div>
<div class="r" style="left:0;top:47.5px;width:27px;height:19.30000000000001px;overflow:hidden"><div class="t" style="left:9.90px;top:4.70px;font-size:14px;line-height:14px;color:#262626">3</div></div>
<div class="r" style="left:0;top:67.30000000000001px;width:27px;height:36.69999999999999px;overflow:hidden"><div class="t" style="left:9.90px;top:22.10px;font-size:14px;line-height:14px;color:#262626">4</div></div>
<div class="r" style="left:0;top:104.5px;width:27px;height:37.0px;overflow:hidden"><div class="t" style="left:9.90px;top:22.40px;font-size:14px;line-height:14px;color:#262626">5</div></div>
<div class="r" style="left:0;top:142.0px;width:27px;height:37.0px;overflow:hidden"><div class="t" style="left:9.90px;top:22.40px;font-size:14px;line-height:14px;color:#262626">6</div></div>
<div class="r" style="left:0;top:179.5px;width:27px;height:37.0px;overflow:hidden"><div class="t" style="left:9.90px;top:22.40px;font-size:14px;line-height:14px;color:#262626">7</div></div>
<div class="r" style="left:0;top:217.0px;width:27px;height:37.5px;background:#d2d2d2"></div>
<div class="r" style="left:0;top:217.0px;width:27px;height:37.0px;overflow:hidden"><div class="t" style="left:9.90px;top:22.40px;font-size:14px;line-height:14px;color:#217346">8</div></div>
<div class="r" style="left:0;top:254.5px;width:27px;height:37.0px;overflow:hidden"><div class="t" style="left:9.90px;top:22.40px;font-size:14px;line-height:14px;color:#262626">9</div></div>
<div class="r" style="left:0;top:292.0px;width:27px;height:37.0px;overflow:hidden"><div class="t" style="left:6.00px;top:22.40px;font-size:14px;line-height:14px;color:#262626">10</div></div>
<div class="r" style="left:0;top:329.5px;width:27px;height:37.0px;overflow:hidden"><div class="t" style="left:6.55px;top:22.40px;font-size:14px;line-height:14px;color:#262626">11</div></div>
<div class="r" style="left:0;top:367.0px;width:27px;height:37.0px;overflow:hidden"><div class="t" style="left:6.00px;top:22.40px;font-size:14px;line-height:14px;color:#262626">12</div></div>
<div class="r" style="left:0;top:404.5px;width:27px;height:37.0px;overflow:hidden"><div class="t" style="left:6.00px;top:22.40px;font-size:14px;line-height:14px;color:#262626">13</div></div>
<div class="r" style="left:0;top:442.0px;width:27px;height:37.0px;overflow:hidden"><div class="t" style="left:6.00px;top:22.40px;font-size:14px;line-height:14px;color:#262626">14</div></div>
<div class="r" style="left:0;top:479.5px;width:27px;height:37.0px;overflow:hidden"><div class="t" style="left:6.00px;top:22.40px;font-size:14px;line-height:14px;color:#262626">15</div></div>
<div class="r" style="left:0;top:517.0px;width:27px;height:37.0px;overflow:hidden"><div class="t" style="left:6.00px;top:22.40px;font-size:14px;line-height:14px;color:#262626">16</div></div>
<div class="r" style="left:0;top:40.5px;width:27px;height:1px;background:#c2c2c2"></div>
<div class="r" style="left:0;top:47.0px;width:27px;height:1px;background:#c2c2c2"></div>
<div class="r" style="left:0;top:66.80000000000001px;width:27px;height:1px;background:#c2c2c2"></div>
<div class="r" style="left:0;top:104.0px;width:27px;height:1px;background:#c2c2c2"></div>
<div class="r" style="left:0;top:141.5px;width:27px;height:1px;background:#c2c2c2"></div>
<div class="r" style="left:0;top:179.0px;width:27px;height:1px;background:#c2c2c2"></div>
<div class="r" style="left:0;top:216.5px;width:27px;height:1px;background:#c2c2c2"></div>
<div class="r" style="left:0;top:254.0px;width:27px;height:1px;background:#c2c2c2"></div>
<div class="r" style="left:0;top:291.5px;width:27px;height:1px;background:#c2c2c2"></div>
<div class="r" style="left:0;top:329.0px;width:27px;height:1px;background:#c2c2c2"></div>
<div class="r" style="left:0;top:366.5px;width:27px;height:1px;background:#c2c2c2"></div>
<div class="r" style="left:0;top:404.0px;width:27px;height:1px;background:#c2c2c2"></div>
<div class="r" style="left:0;top:441.5px;width:27px;height:1px;background:#c2c2c2"></div>
<div class="r" style="left:0;top:479.0px;width:27px;height:1px;background:#c2c2c2"></div>
<div class="r" style="left:0;top:516.5px;width:27px;height:1px;background:#c2c2c2"></div>
<div class="r" style="left:0;top:554.0px;width:27px;height:1px;background:#c2c2c2"></div>
<div class="r" style="left:26.5px;top:217px;width:1.5px;height:38px;background:#217346"></div>
</div>
<div class="r" style="left:28px;top:244px;width:1550px;height:550px;background:#ffffff;"></div>
<div class="r" style="left:28px;top:244px;width:1550px;height:48px;background:#595959;"></div>
<div class="r" style="left:28px;top:292px;width:139px;height:502px;background:#595959;"></div>
<div class="r" style="left:449px;top:348px;width:1129px;height:1.1999999999999886px;background:#c6c6c6;"></div>
<div class="r" style="left:167px;top:348px;width:11px;height:1.1999999999999886px;background:#c6c6c6;"></div>
<div class="r" style="left:173px;top:251px;width:98.19999999999999px;height:30.5px;border-radius:5px;box-sizing:border-box;border:1.5px solid #cfcfcf"></div>
<div class="t" style="left:195.60px;top:259.75px;font-size:13px;line-height:13px;color:#ffffff;font-weight:bold;-webkit-text-stroke:0.3px #ffffff;letter-spacing:0.000px;transform:scaleX(0.8179);transform-origin:0.00px 0;">RECEITAS</div>
<div class="r" style="left:278px;top:251px;width:98px;height:30.5px;border-radius:5px;box-sizing:border-box;border:1.5px solid #cfcfcf"></div>
<div class="t" style="left:300.25px;top:259.75px;font-size:13px;line-height:13px;color:#ffffff;font-weight:bold;-webkit-text-stroke:0.3px #ffffff;letter-spacing:0.000px;transform:scaleX(0.7556);transform-origin:0.00px 0;">DESPESAS</div>
<div class="r" style="left:381px;top:251px;width:140px;height:30.5px;background:#ffc000;border-radius:5px;box-sizing:border-box;border:1px solid #ffd766"></div>
<div class="t" style="left:415.50px;top:259.75px;font-size:13px;line-height:13px;color:#1a1a1a;font-weight:bold;-webkit-text-stroke:0.3px #1a1a1a;letter-spacing:0.000px;transform:scaleX(0.8333);transform-origin:0.00px 0;">CENTROS DE</div>
<div class="r" style="left:526px;top:251px;width:102.60000000000002px;height:30.5px;border-radius:5px;box-sizing:border-box;border:1.5px solid #cfcfcf"></div>
<div class="t" style="left:553.55px;top:259.75px;font-size:13px;line-height:13px;color:#ffffff;font-weight:bold;-webkit-text-stroke:0.3px #ffffff;letter-spacing:0.000px;transform:scaleX(0.8437);transform-origin:0.00px 0;">BANCOS</div>
<div class="r" style="left:632.8px;top:251px;width:182.20000000000005px;height:30.5px;border-radius:5px;box-sizing:border-box;border:1.5px solid #cfcfcf"></div>
<div class="t" style="left:645.80px;top:259.75px;font-size:13px;line-height:13px;color:#ffffff;font-weight:bold;-webkit-text-stroke:0.3px #ffffff;letter-spacing:0.000px;transform:scaleX(0.8448);transform-origin:0.00px 0;">CLIENTES / FORNECEDORES</div>
<div class="r" style="left:819px;top:251px;width:137px;height:30.5px;border-radius:5px;box-sizing:border-box;border:1.5px solid #cfcfcf"></div>
<div class="t" style="left:833.75px;top:259.75px;font-size:13px;line-height:13px;color:#ffffff;font-weight:bold;-webkit-text-stroke:0.3px #ffffff;letter-spacing:0.000px;transform:scaleX(0.8966);transform-origin:0.00px 0;">TRANSFERÊNCIAS</div>
<div class="t" style="left:243.10px;top:296.75px;font-size:13px;line-height:13px;color:#1a1a1a;font-style:italic;letter-spacing:0.133px;">*Cadastre os centros de custos que vai utilizar</div>
<div class="r" style="left:28px;top:348.2px;width:139px;height:1.1999999999999886px;background:#8e8e8e;"></div>
<div class="r" style="left:28px;top:351.4px;width:139px;height:49.400000000000034px;background:#ffc000;"></div>
<div class="r" style="left:28px;top:400.8px;width:139px;height:13px;background:linear-gradient(#4b4b4b,#595959)"></div>
<div class="t" style="left:37.00px;top:370.68px;font-size:12.5px;line-height:12.5px;color:#1a1a1a;font-weight:bold;-webkit-text-stroke:0.3px #1a1a1a;letter-spacing:0.000px;transform:scaleX(0.9008);transform-origin:0.00px 0;">PLANO DE CONTAS</div>
<div class="t" style="left:37.00px;top:426.57px;font-size:12.5px;line-height:12.5px;color:#ffffff;font-weight:bold;-webkit-text-stroke:0.3px #ffffff;letter-spacing:0.000px;transform:scaleX(0.9093);transform-origin:0.00px 0;">LANÇAMENTOS</div>
<div class="t" style="left:37.00px;top:473.07px;font-size:12.5px;line-height:12.5px;color:#ffffff;font-weight:bold;-webkit-text-stroke:0.3px #ffffff;letter-spacing:0.000px;transform:scaleX(0.9071);transform-origin:0.00px 0;">PLANEJAMENTO</div>
<div class="t" style="left:37.00px;top:489.57px;font-size:12.5px;line-height:12.5px;color:#ffffff;font-weight:bold;-webkit-text-stroke:0.3px #ffffff;letter-spacing:0.000px;transform:scaleX(0.9062);transform-origin:0.00px 0;">FINANCEIRO</div>
<div class="t" style="left:37.00px;top:536.67px;font-size:12.5px;line-height:12.5px;color:#ffffff;font-weight:bold;-webkit-text-stroke:0.3px #ffffff;letter-spacing:0.000px;transform:scaleX(0.8784);transform-origin:0.00px 0;">RELATÓRIOS GERAIS</div>
<div class="t" style="left:37.00px;top:585.58px;font-size:12.5px;line-height:12.5px;color:#ffffff;font-weight:bold;-webkit-text-stroke:0.3px #ffffff;letter-spacing:0.000px;transform:scaleX(0.8765);transform-origin:0.00px 0;">RELATÓRIOS</div>
<div class="t" style="left:37.00px;top:602.17px;font-size:12.5px;line-height:12.5px;color:#ffffff;font-weight:bold;-webkit-text-stroke:0.3px #ffffff;letter-spacing:0.000px;transform:scaleX(0.8393);transform-origin:0.00px 0;">ESPECÍFICOS</div>
<div class="t" style="left:37.00px;top:650.77px;font-size:12.5px;line-height:12.5px;color:#ffffff;font-weight:bold;-webkit-text-stroke:0.3px #ffffff;letter-spacing:0.000px;transform:scaleX(0.8929);transform-origin:0.00px 0;">DASHBOARDS</div>
<div class="t" style="left:37.00px;top:708.58px;font-size:12.5px;line-height:12.5px;color:#ffffff;font-weight:bold;-webkit-text-stroke:0.3px #ffffff;letter-spacing:0.000px;transform:scaleX(0.8756);transform-origin:0.00px 0;">INSTRUÇÕES</div>
<svg class="r" style="left:25px;top:240px;" width="110" height="110" viewBox="0 0 850 850"><rect x="30" y="335" width="760" height="450" fill="#b47e6c"/><rect x="30" y="330" width="760" height="20" fill="#141414"/><rect x="30" y="480" width="760" height="20" fill="#141414"/><rect x="30" y="555" width="760" height="20" fill="#141414"/><rect x="30" y="625" width="760" height="20" fill="#141414"/><rect x="30" y="700" width="760" height="20" fill="#141414"/><rect x="30" y="770" width="760" height="20" fill="#141414"/><rect x="570" y="400" width="220" height="18" fill="#141414"/><rect x="30" y="345" width="370" height="135" fill="#c0907a"/><polygon points="208,495 318,495 290,780 150,780" fill="#8cc21b" stroke="#141414" stroke-width="20" stroke-linejoin="round"/><polygon points="320,495 405,495 405,780 295,780" fill="#8cc21b" stroke="#141414" stroke-width="20" stroke-linejoin="round"/><polygon points="412,340 485,340 525,780 412,780" fill="#8cc21b" stroke="#141414" stroke-width="20" stroke-linejoin="round"/><polygon points="490,340 560,340 660,780 530,780" fill="#8cc21b" stroke="#141414" stroke-width="20" stroke-linejoin="round"/><path d="M458 100 C493 140 513 200 508 240 C503 280 478 295 458 295 C438 295 413 280 408 240 C403 200 423 140 458 100z" fill="#8cc21b" stroke="#141414" stroke-width="20"/><path d="M458 225 V340" stroke="#141414" stroke-width="22"/><path d="M590 100 C625 140 645 200 640 240 C635 280 610 295 590 295 C570 295 545 280 540 240 C535 200 555 140 590 100z" fill="#8cc21b" stroke="#141414" stroke-width="20"/><path d="M590 225 V340" stroke="#141414" stroke-width="22"/><path d="M725 100 C760 140 780 200 775 240 C770 280 745 295 725 295 C705 295 680 280 675 240 C670 200 690 140 725 100z" fill="#8cc21b" stroke="#141414" stroke-width="20"/><path d="M725 225 V340" stroke="#141414" stroke-width="22"/><polygon points="225,50 398,198 372,232 225,128 78,232 40,205" fill="#b47e6c" stroke="#141414" stroke-width="22" stroke-linejoin="round"/><polygon points="225,135 360,230 360,392 92,392 92,230" fill="#f0474c" stroke="#141414" stroke-width="22" stroke-linejoin="round"/><rect x="190" y="292" width="72" height="95" fill="#f7d67e" stroke="#141414" stroke-width="20"/></svg>
<div class="r" style="left:178.4px;top:312px;width:269.6px;height:36.5px;background:#595959;"></div>
<div class="r" style="left:237.8px;top:312px;width:1.5999999999999943px;height:36.5px;background:#e6e6e6;"></div>
<div class="t" style="left:190.25px;top:324.55px;font-size:13px;line-height:13px;color:#ffffff;font-weight:bold;-webkit-text-stroke:0.3px #ffffff;letter-spacing:0.025px;">3.1</div>
<div class="t" style="left:251.00px;top:324.55px;font-size:13px;line-height:13px;color:#ffffff;font-weight:bold;-webkit-text-stroke:0.3px #ffffff;letter-spacing:0.000px;transform:scaleX(0.9280);transform-origin:0.00px 0;">Centro de Custos</div>
<div class="r" style="left:178.4px;top:348.5px;width:59.79999999999998px;height:37.5px;background:#595959;"></div>
<div class="r" style="left:178.4px;top:348.0px;width:59.79999999999998px;height:2.0px;background:#c9c9c9;"></div>
<div class="r" style="left:238.2px;top:348.0px;width:210.3px;height:1.1999999999999886px;background:#dcdcdc;"></div>
<div class="t" style="left:190.70px;top:361.62px;font-size:13.5px;line-height:13.5px;color:#f2f2f2;letter-spacing:0.000px;-webkit-text-stroke:0.2px #f2f2f2;">1</div>
<div class="t" style="left:251.00px;top:361.45px;font-size:13px;line-height:13px;color:#1f1f1f;letter-spacing:0.014px;">Produção Animal</div>
<div class="r" style="left:178.4px;top:386.0px;width:59.79999999999998px;height:37.5px;background:#595959;"></div>
<div class="r" style="left:178.4px;top:385.5px;width:59.79999999999998px;height:2.0px;background:#c9c9c9;"></div>
<div class="r" style="left:238.2px;top:385.5px;width:210.3px;height:1.1999999999999886px;background:#dcdcdc;"></div>
<div class="t" style="left:190.70px;top:399.12px;font-size:13.5px;line-height:13.5px;color:#f2f2f2;letter-spacing:0.000px;-webkit-text-stroke:0.2px #f2f2f2;">2</div>
<div class="t" style="left:251.00px;top:398.95px;font-size:13px;line-height:13px;color:#1f1f1f;letter-spacing:-0.106px;">Culturas Agrícolas</div>
<div class="r" style="left:178.4px;top:423.5px;width:59.79999999999998px;height:37.5px;background:#595959;"></div>
<div class="r" style="left:178.4px;top:423.0px;width:59.79999999999998px;height:2.0px;background:#c9c9c9;"></div>
<div class="r" style="left:238.2px;top:423.0px;width:210.3px;height:1.1999999999999886px;background:#dcdcdc;"></div>
<div class="t" style="left:190.70px;top:436.62px;font-size:13.5px;line-height:13.5px;color:#f2f2f2;letter-spacing:0.000px;-webkit-text-stroke:0.2px #f2f2f2;">3</div>
<div class="t" style="left:251.00px;top:436.45px;font-size:13px;line-height:13px;color:#1f1f1f;letter-spacing:0.138px;">Manutenção e Infraestrutura</div>
<div class="r" style="left:178.4px;top:461.0px;width:59.79999999999998px;height:37.5px;background:#595959;"></div>
<div class="r" style="left:178.4px;top:460.5px;width:59.79999999999998px;height:2.0px;background:#c9c9c9;"></div>
<div class="r" style="left:238.2px;top:460.5px;width:210.3px;height:1.1999999999999886px;background:#dcdcdc;"></div>
<div class="t" style="left:190.70px;top:474.12px;font-size:13.5px;line-height:13.5px;color:#f2f2f2;letter-spacing:0.000px;-webkit-text-stroke:0.2px #f2f2f2;">4</div>
<div class="t" style="left:251.00px;top:473.95px;font-size:13px;line-height:13px;color:#1f1f1f;letter-spacing:0.000px;transform:scaleX(0.9662);transform-origin:0.00px 0;">Comercialização e Vendas</div>
<div class="r" style="left:178.4px;top:498.5px;width:59.79999999999998px;height:37.5px;background:#595959;"></div>
<div class="r" style="left:178.4px;top:498.0px;width:59.79999999999998px;height:2.0px;background:#c9c9c9;"></div>
<div class="r" style="left:238.2px;top:498.0px;width:210.3px;height:1.1999999999999886px;background:#dcdcdc;"></div>
<div class="t" style="left:190.70px;top:511.62px;font-size:13.5px;line-height:13.5px;color:#f2f2f2;letter-spacing:0.000px;-webkit-text-stroke:0.2px #f2f2f2;">5</div>
<div class="t" style="left:251.00px;top:511.45px;font-size:13px;line-height:13px;color:#1f1f1f;letter-spacing:0.100px;">Administrativo e Financeiro</div>
<div class="r" style="left:178.4px;top:536.0px;width:59.79999999999998px;height:37.5px;background:#595959;"></div>
<div class="r" style="left:178.4px;top:535.5px;width:59.79999999999998px;height:2.0px;background:#c9c9c9;"></div>
<div class="r" style="left:238.2px;top:535.5px;width:210.3px;height:1.2000000000000455px;background:#dcdcdc;"></div>
<div class="t" style="left:190.70px;top:549.12px;font-size:13.5px;line-height:13.5px;color:#f2f2f2;letter-spacing:0.000px;-webkit-text-stroke:0.2px #f2f2f2;">6</div>
<div class="t" style="left:251.00px;top:548.95px;font-size:13px;line-height:13px;color:#262626;letter-spacing:0.000px;">-</div>
<div class="r" style="left:178.4px;top:573.5px;width:59.79999999999998px;height:37.5px;background:#595959;"></div>
<div class="r" style="left:178.4px;top:573.0px;width:59.79999999999998px;height:2.0px;background:#c9c9c9;"></div>
<div class="r" style="left:238.2px;top:573.0px;width:210.3px;height:1.2000000000000455px;background:#dcdcdc;"></div>
<div class="t" style="left:190.70px;top:586.62px;font-size:13.5px;line-height:13.5px;color:#f2f2f2;letter-spacing:0.000px;-webkit-text-stroke:0.2px #f2f2f2;">7</div>
<div class="t" style="left:251.00px;top:586.45px;font-size:13px;line-height:13px;color:#262626;letter-spacing:0.000px;">-</div>
<div class="r" style="left:178.4px;top:611.0px;width:59.79999999999998px;height:37.5px;background:#595959;"></div>
<div class="r" style="left:178.4px;top:610.5px;width:59.79999999999998px;height:2.0px;background:#c9c9c9;"></div>
<div class="r" style="left:238.2px;top:610.5px;width:210.3px;height:1.2000000000000455px;background:#dcdcdc;"></div>
<div class="t" style="left:190.70px;top:624.12px;font-size:13.5px;line-height:13.5px;color:#f2f2f2;letter-spacing:0.000px;-webkit-text-stroke:0.2px #f2f2f2;">8</div>
<div class="t" style="left:251.00px;top:623.95px;font-size:13px;line-height:13px;color:#262626;letter-spacing:0.000px;">-</div>
<div class="r" style="left:178.4px;top:648.5px;width:59.79999999999998px;height:37.5px;background:#595959;"></div>
<div class="r" style="left:178.4px;top:648.0px;width:59.79999999999998px;height:2.0px;background:#c9c9c9;"></div>
<div class="r" style="left:238.2px;top:648.0px;width:210.3px;height:1.2000000000000455px;background:#dcdcdc;"></div>
<div class="t" style="left:190.70px;top:661.62px;font-size:13.5px;line-height:13.5px;color:#f2f2f2;letter-spacing:0.000px;-webkit-text-stroke:0.2px #f2f2f2;">9</div>
<div class="t" style="left:251.00px;top:661.45px;font-size:13px;line-height:13px;color:#262626;letter-spacing:0.000px;">-</div>
<div class="r" style="left:178.4px;top:686.0px;width:59.79999999999998px;height:37.5px;background:#595959;"></div>
<div class="r" style="left:178.4px;top:685.5px;width:59.79999999999998px;height:2.0px;background:#c9c9c9;"></div>
<div class="r" style="left:238.2px;top:685.5px;width:210.3px;height:1.2000000000000455px;background:#dcdcdc;"></div>
<div class="t" style="left:190.70px;top:699.12px;font-size:13.5px;line-height:13.5px;color:#f2f2f2;letter-spacing:0.000px;-webkit-text-stroke:0.2px #f2f2f2;">10</div>
<div class="t" style="left:251.00px;top:698.95px;font-size:13px;line-height:13px;color:#262626;letter-spacing:0.000px;">-</div>
<div class="r" style="left:178.4px;top:723.5px;width:59.79999999999998px;height:37.5px;background:#595959;"></div>
<div class="r" style="left:178.4px;top:723.0px;width:59.79999999999998px;height:2.0px;background:#c9c9c9;"></div>
<div class="r" style="left:238.2px;top:723.0px;width:210.3px;height:1.2000000000000455px;background:#dcdcdc;"></div>
<div class="t" style="left:190.70px;top:736.62px;font-size:13.5px;line-height:13.5px;color:#f2f2f2;letter-spacing:0.000px;-webkit-text-stroke:0.2px #f2f2f2;">11</div>
<div class="t" style="left:251.00px;top:736.45px;font-size:13px;line-height:13px;color:#262626;letter-spacing:0.000px;">-</div>
<div class="r" style="left:178.4px;top:761.0px;width:59.79999999999998px;height:37.5px;background:#595959;"></div>
<div class="r" style="left:178.4px;top:760.5px;width:59.79999999999998px;height:2.0px;background:#c9c9c9;"></div>
<div class="r" style="left:238.2px;top:760.5px;width:210.3px;height:1.2000000000000455px;background:#dcdcdc;"></div>
<div class="t" style="left:190.70px;top:774.12px;font-size:13.5px;line-height:13.5px;color:#f2f2f2;letter-spacing:0.000px;-webkit-text-stroke:0.2px #f2f2f2;">12</div>
<div class="t" style="left:251.00px;top:773.95px;font-size:13px;line-height:13px;color:#262626;letter-spacing:0.000px;">-</div>
<div class="r" style="left:448px;top:348.5px;width:1.1999999999999886px;height:445.5px;background:#d6d6d6;"></div>
<div class="r" style="left:238.4px;top:460.3px;width:211.4px;height:39.4px;box-sizing:border-box;border:2px solid #217346"></div>
<div class="r" style="left:446.5px;top:496px;width:6.0px;height:6px;background:#217346;border:1px solid #fff;box-sizing:border-box;"></div>
<div class="r" style="left:1578px;top:222px;width:22px;height:605px;background:#e8e9ec;"></div>
<div class="r" style="left:1581px;top:225.5px;width:16.5px;height:570px;background:#f5f5f5;border-radius:8px"></div>
<svg class="r" style="left:1584px;top:229px;" width="11" height="8" viewBox="0 0 11 8"><path d="M5.5 0.5L10.5 7H0.5z" fill="#6b6b6b"/></svg>
<div class="r" style="left:1585px;top:242px;width:9px;height:17px;background:#6f6f6f;border-radius:4.5px"></div>
<svg class="r" style="left:1584px;top:783px;" width="11" height="8" viewBox="0 0 11 8"><path d="M5.5 7.5L10.5 1H0.5z" fill="#6b6b6b"/></svg>
<div class="r" style="left:0px;top:794px;width:1578px;height:33px;background:#e8e9ec;"></div>
<div class="r" style="left:15.5px;top:805.3px;width:2.5px;height:2.5px;border-radius:50%;background:#333"></div>
<div class="r" style="left:15.5px;top:809.8px;width:2.5px;height:2.5px;border-radius:50%;background:#333"></div>
<div class="r" style="left:15.5px;top:814.3px;width:2.5px;height:2.5px;border-radius:50%;background:#333"></div>
<div class="r" style="left:34px;top:802px;width:1543px;height:17px;background:#f5f5f5;border-radius:8.5px"></div>
<svg class="r" style="left:38px;top:805px;" width="8" height="11" viewBox="0 0 8 11"><path d="M0.5 5.5L7.5 0.5v10z" fill="#6b6b6b"/></svg>
<div class="r" style="left:51px;top:806px;width:1433px;height:9px;background:#6f6f6f;border-radius:4.5px"></div>
<svg class="r" style="left:1566px;top:805px;" width="8" height="11" viewBox="0 0 8 11"><path d="M7.5 5.5L0.5 0.5v10z" fill="#6b6b6b"/></svg>
<div class="r" style="left:0px;top:827px;width:1600px;height:23px;background:#f3f3f3;"></div>
<div class="r" style="left:0px;top:826.5px;width:1600px;height:1.0px;background:#dcdcdc;"></div>
<div class="t" style="left:11.60px;top:833.85px;font-size:11px;line-height:11px;color:#333;letter-spacing:-0.100px;">Pronto</div>
<svg class="r" style="left:65px;top:832px;" width="17" height="15" viewBox="0 0 17 15"><rect x="1" y="1" width="14" height="11" fill="none" stroke="#333" stroke-width="1.1"/><path d="M1 3.5h14M3 6h3M3 8.5h2" stroke="#333" stroke-width="1.1"/><circle cx="11" cy="10" r="4" fill="#f3f3f3" stroke="#333" stroke-width="1.1"/><circle cx="11" cy="10" r="1.8" fill="#333"/></svg>
<svg class="r" style="left:98px;top:832px;" width="17" height="15" viewBox="0 0 17 15"><circle cx="7.5" cy="2.5" r="1.7" fill="none" stroke="#333" stroke-width="1.1"/><path d="M1 5.5c3 1.2 9 1.2 13 0M5 6.5v7l2.5-3 2.5 3v-7M9 9l6 6M15 9l-6 6" fill="none" stroke="#333" stroke-width="1.1"/></svg>
<div class="t" style="left:118.20px;top:833.75px;font-size:11px;line-height:11px;color:#262626;font-weight:bold;-webkit-text-stroke:0.3px #262626;letter-spacing:0.000px;transform:scaleX(0.9565);transform-origin:0.00px 0;">Acessibilidade: investigar</div>
<svg class="r" style="left:1156px;top:831px;" width="17" height="16" viewBox="0 0 17 16"><path d="M14.5 8V1.5H1.5v9H7M4 10.5v2h3" fill="none" stroke="#333" stroke-width="1.1"/><circle cx="11.5" cy="12" r="2.3" fill="none" stroke="#333" stroke-width="1.3"/><path d="M11.5 8.5v1.2M11.5 14.3v1.2M8 12h1.2M13.8 12h1.2M9 9.5l.9.9M13.1 13.6l.9.9M14 9.5l-.9.9M9.9 13.6l-.9.9" stroke="#333" stroke-width="1.1"/></svg>
<div class="t" style="left:1174.00px;top:834.35px;font-size:11px;line-height:11px;color:#333;letter-spacing:-0.095px;">Exibir Configurações</div>
<div class="r" style="left:1295.3px;top:827.5px;width:41.100000000000136px;height:22.5px;background:#e0e0e0;"></div>
<svg class="r" style="left:1307px;top:831px;" width="16" height="16" viewBox="0 0 16 16"><rect x="1.5" y="1.5" width="13" height="13" fill="none" stroke="#333" stroke-width="1.2"/><path d="M1.5 5.8h13M1.5 10.2h13M5.8 1.5v13M10.2 1.5v13" stroke="#333" stroke-width="1.2"/></svg>
<svg class="r" style="left:1349px;top:831px;" width="17" height="16" viewBox="0 0 17 16"><rect x="1" y="1.5" width="15" height="13" fill="none" stroke="#333" stroke-width="1.2"/><rect x="4.5" y="4" width="8" height="8" fill="none" stroke="#333" stroke-width="1"/><path d="M6.3 6.2h4.4M6.3 8h4.4M6.3 9.8h4.4" stroke="#333" stroke-width="0.7"/></svg>
<svg class="r" style="left:1391px;top:831px;" width="17" height="16" viewBox="0 0 17 16"><path d="M1.5 1.5h14v13h-14zM5.5 1.5v6.5h6.5v-6.5M8.7 1.5v6.5" fill="none" stroke="#333" stroke-width="1.2"/></svg>
<div class="r" style="left:1426px;top:838.7px;width:7.2999999999999545px;height:1.1999999999999318px;background:#444;"></div>
<div class="r" style="left:1439px;top:839px;width:103.5px;height:1px;background:#888;"></div>
<div class="r" style="left:1483px;top:833px;width:5.5px;height:11.600000000000023px;background:#555;border-radius:1px;"></div>
<div class="r" style="left:1491px;top:836px;width:1px;height:7px;background:#888;"></div>
<div class="r" style="left:1548.3px;top:838.7px;width:8.0px;height:1.1999999999999318px;background:#444;"></div>
<div class="r" style="left:1551.7px;top:835.2px;width:1.2000000000000455px;height:8.099999999999909px;background:#444;"></div>
<div class="t" style="left:1570.00px;top:834.15px;font-size:11px;line-height:11px;color:#333;letter-spacing:0.000px;transform:scaleX(0.9091);transform-origin:0.00px 0;">90%</div>
</body></html>
